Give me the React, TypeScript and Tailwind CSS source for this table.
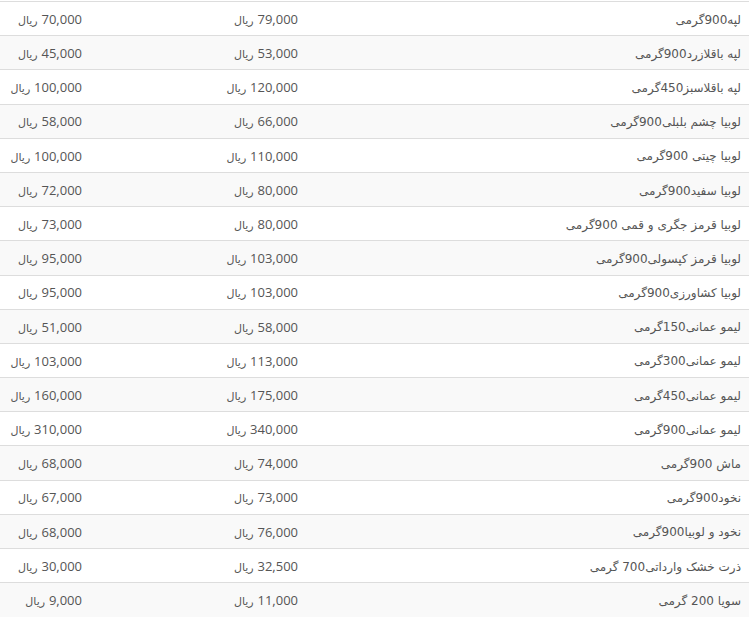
const rows: [string, string, string][] = [
  ["لپه900گرمی", "79,000", "70,000"],
  ["لپه باقلازرد900گرمی", "53,000", "45,000"],
  ["لپه باقلاسبز450گرمی", "120,000", "100,000"],
  ["لوبیا چشم بلبلی900گرمی", "66,000", "58,000"],
  ["لوبیا چیتی 900گرمی", "110,000", "100,000"],
  ["لوبیا سفید900گرمی", "80,000", "72,000"],
  ["لوبیا قرمز جگری و قمی 900گرمی", "80,000", "73,000"],
  ["لوبیا قرمز کپسولی900گرمی", "103,000", "95,000"],
  ["لوبیا کشاورزی900گرمی", "103,000", "95,000"],
  ["لیمو عمانی150گرمی", "58,000", "51,000"],
  ["لیمو عمانی300گرمی", "113,000", "103,000"],
  ["لیمو عمانی450گرمی", "175,000", "160,000"],
  ["لیمو عمانی900گرمی", "340,000", "310,000"],
  ["ماش 900گرمی", "74,000", "68,000"],
  ["نخود900گرمی", "73,000", "67,000"],
  ["نخود و لوبیا900گرمی", "76,000", "68,000"],
  ["ذرت خشک وارداتی700 گرمی", "32,500", "30,000"],
  ["سویا 200 گرمی", "11,000", "9,000"],
];

function Price({ value }: { value: string }) {
  return (
    <>
      <span className="text-[13px]" style={{ fontFamily: "'Open Sans', sans-serif" }}>{value}</span>{" "}
      <span className="text-[11px]">ریال</span>
    </>
  );
}

export default function App() {
  return (
    <div className="w-[754px] bg-white pt-px" style={{ fontFamily: "'DejaVu Sans', sans-serif" }}>
      <table dir="rtl" className="w-[749px] table-fixed border-collapse text-[12px] text-[#555]">
        <colgroup>
          <col className="w-[443px]" />
          <col className="w-[216px]" />
          <col className="w-[90px]" />
        </colgroup>
        <tbody>
          {rows.map(([name, price, off], i) => (
            <tr
              key={i}
              className={`h-[34.2px] border-t border-[#dddddd] ${i % 2 === 1 ? "bg-[#f9f9f9]" : "bg-white"}`}
            >
              <td className="whitespace-nowrap px-2 pt-[2px] pb-0 text-right align-middle">{name}</td>
              <td className="whitespace-nowrap px-2 pt-[2px] pb-0 text-right align-middle"><Price value={price} /></td>
              <td className="whitespace-nowrap px-2 pt-[2px] pb-0 text-right align-middle"><Price value={off} /></td>
            </tr>
          ))}
        </tbody>
      </table>
    </div>
  );
}
